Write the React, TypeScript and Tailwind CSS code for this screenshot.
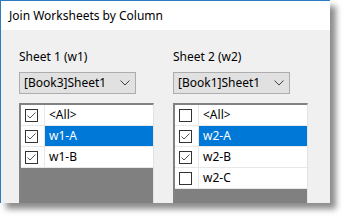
import React from "react";

const Check = ({ checked }: { checked: boolean }) => (
  <div className="w-[13px] h-[13px] border border-[#333333] bg-white flex items-center justify-center">
    {checked && (
      <svg width="11" height="11" viewBox="0 0 11 11">
        <polyline points="1.5,5.5 4,8 9.5,2.5" fill="none" stroke="#555" strokeWidth="1" />
      </svg>
    )}
  </div>
);

type Row = { label: string; checked: boolean; selected?: boolean };

const List = ({ rows }: { rows: Row[] }) => (
  <div className="w-[135px] h-[100px] border-t-2 border-l-2 border-t-[#828282] border-l-[#828282] border-r border-r-[#e3e3e3] bg-[#808080] flex flex-col">
    {rows.map((r) => (
      <div key={r.label} className="flex shrink-0 h-[21px] bg-white border-b border-[#e8e8e8]">
        <div className="w-[24px] flex items-center pl-[4px] border-r border-[#e8e8e8] bg-white">
          <Check checked={r.checked} />
        </div>
        <div
          className={
            "flex-1 flex items-center pl-[4px] " +
            (r.selected ? "bg-[#0078d7] text-white" : "text-black")
          }
        >
          {r.label}
        </div>
      </div>
    ))}
  </div>
);

const Dropdown = ({ text }: { text: string }) => (
  <div className="w-[117px] h-[22px] bg-[#e1e1e1] border border-[#adadad] flex items-center justify-between pl-[4px] pr-[5px]">
    <span>{text}</span>
    <svg width="10" height="6" viewBox="0 0 10 6">
      <polyline points="0.5,0.5 5,5 9.5,0.5" fill="none" stroke="#404040" strokeWidth="1" />
    </svg>
  </div>
);

export default function App() {
  return (
    <div
      className="w-[345px] h-[218px] bg-white text-[12px] text-black"
      style={{ fontFamily: '"Segoe UI", "Noto Sans", sans-serif' }}
    >
      <div className="w-[330px] h-[203px] border-l border-t border-[#2b7bc0] bg-[#f0f0f0] shadow-[6px_6px_6px_rgba(0,0,0,0.45)] flex flex-col overflow-hidden">
        <div className="h-[29px] shrink-0 bg-white pl-[8px] flex items-center">Join Worksheets by Column</div>
        <div className="flex shrink-0 pl-[18px] pt-[19px] gap-[19px]">
          <div className="flex flex-col w-[135px]">
            <div className="h-[16px] leading-[16px]">Sheet 1 (w1)</div>
            <div className="mt-[7px]">
              <Dropdown text="[Book3]Sheet1" />
            </div>
            <div className="mt-[9px]">
              <List
                rows={[
                  { label: "<All>", checked: true },
                  { label: "w1-A", checked: true, selected: true },
                  { label: "w1-B", checked: true },
                ]}
              />
            </div>
          </div>
          <div className="flex flex-col w-[135px]">
            <div className="h-[16px] leading-[16px]">Sheet 2 (w2)</div>
            <div className="mt-[7px]">
              <Dropdown text="[Book1]Sheet1" />
            </div>
            <div className="mt-[9px]">
              <List
                rows={[
                  { label: "<All>", checked: false },
                  { label: "w2-A", checked: true, selected: true },
                  { label: "w2-B", checked: true },
                  { label: "w2-C", checked: false },
                ]}
              />
            </div>
          </div>
        </div>
      </div>
    </div>
  );
}
